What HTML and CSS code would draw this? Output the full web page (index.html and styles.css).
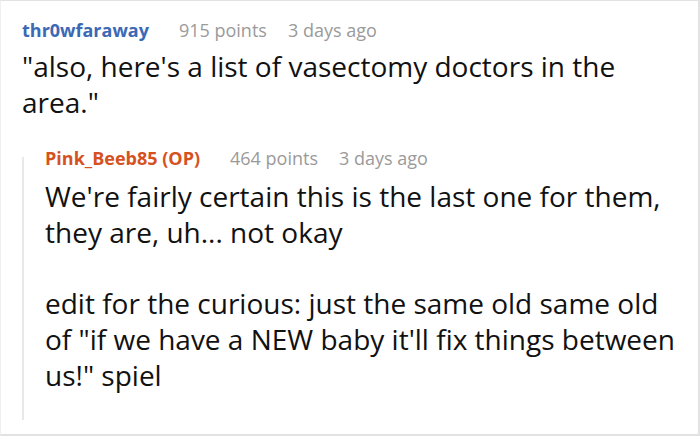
FILE: index.html
```html
<!DOCTYPE html>
<html>
<head>
<meta charset="utf-8">
<link rel="stylesheet" href="styles.css">
</head>
<body>
<div class="frame">
  <div class="comment">
    <div class="meta">
      <span class="author">thr0wfaraway</span>
      <span class="info">915 points</span>
      <span class="info">3 days ago</span>
    </div>
    <div class="text">
      <p>"also, here's a list of vasectomy doctors in the area."</p>
    </div>
    <div class="reply">
      <div class="meta">
        <span class="author op">Pink_Beeb85 (OP)</span>
        <span class="info">464 points</span>
        <span class="info">3 days ago</span>
      </div>
      <div class="text">
        <p>We're fairly certain this is the last one for them, they are, uh... not okay</p>
        <p>edit for the curious: just the same old same old of "if we have a NEW baby it'll fix things between us!" spiel</p>
      </div>
    </div>
  </div>
</div>
</body>
</html>
```
FILE: styles.css
```css
html, body {
  margin: 0;
  padding: 0;
  background: #ffffff;
}
.frame {
  width: 700px;
  height: 436px;
  box-sizing: border-box;
  border: 1px solid #e2e2e2;
  border-left-color: #f0f0f0;
  border-right-width: 2px;
  border-bottom-width: 2px;
  overflow: hidden;
  font-family: "Open Sans", "Noto Sans", sans-serif;
  color: #111111;
}
.comment {
  padding: 17px 0 0 21px;
}
.meta {
  display: flex;
  gap: 21px;
  font-size: 18px;
  line-height: 24px;
  white-space: nowrap;
}
.author {
  font-weight: 700;
  color: #3b69b5;
  margin-right: 9px;
}
.author.op {
  color: #d5521f;
}
.info {
  color: #9a9a9a;
}
.text {
  font-size: 28px;
  line-height: 36px;
  margin-top: 6px;
  padding-right: 40px;
}
.text p {
  margin: 0 0 35px 0;
}
.reply {
  position: relative;
  margin-top: -9px;
  padding-left: 23px;
  padding-bottom: 27px;
}
.reply::before {
  content: "";
  position: absolute;
  left: 0;
  top: 11px;
  bottom: 0;
  width: 2px;
  background: #e8e8e8;
}
.reply .text {
  margin-top: 8px;
  padding-right: 10px;
}
.reply .text p {
  margin-bottom: 35px;
}
.reply .text p:last-child {
  margin-bottom: 0;
}
```
